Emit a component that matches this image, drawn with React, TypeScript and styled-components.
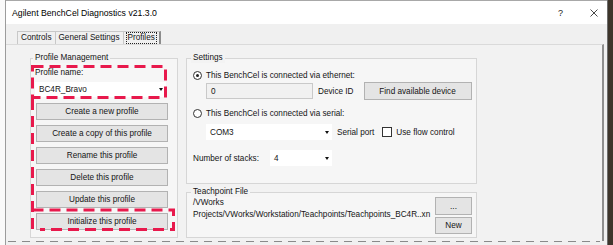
import { createGlobalStyle, styled } from 'styled-components'

const GlobalStyle = createGlobalStyle`
  html, body {
    margin: 0;
    padding: 0;
    background: #ffffff;
  }
  body {
    font-family: "Liberation Sans", Arial, sans-serif;
    font-size: 8.2px;
    color: #141414;
  }
`

/* ----------------------
   Window chrome
---------------------- */

const Frame = styled.div`
  position: relative;
  display: flex;
  width: 613px;
  height: 245px;
  overflow: hidden;
`

const Gutter = styled.div`
  width: 5px;
  background: #fafafa;
`

const Window = styled.div`
  box-sizing: border-box;
  width: 603px;
  display: flex;
  flex-direction: column;
  border-left: 1px solid #9c9c9c;
  border-right: 1px solid #6e6e6e;
`

const Backdrop = styled.div`
  flex: 1;
  background: #3d352b;
`

const TitleBar = styled.div`
  box-sizing: border-box;
  height: 24px;
  display: flex;
  align-items: center;
  padding-left: 6px;
  background: #ffffff;
  border-top: 1px solid #a8a8a8;
  font-size: 8.7px;
  color: #000;
`

const Captions = styled.div`
  margin-left: auto;
  display: flex;
  align-items: center;
  gap: 27px;
  padding-right: 9px;
`

const HelpGlyph = styled.span`
  font-size: 9px;
  color: #222;
`

const Body = styled.div`
  flex: 1;
  display: flex;
  flex-direction: column;
  padding-top: 7px;
  background: #f0f0f0;
`

/* ----------------------
   Tabs
---------------------- */

const TabStrip = styled.div`
  display: flex;
  margin-left: 11px;
  height: 13px;
`

const Tab = styled.div<{ $active?: boolean }>`
  box-sizing: border-box;
  height: 13px;
  padding: 0 3px;
  margin-right: -1px;
  line-height: 11px;
  border: 1px solid #c8c8c8;
  border-bottom: none;
  border-right: ${({ $active }) => ($active ? '2px solid #8c8c8c' : '1px solid #c8c8c8')};
  background: #f0f0f0;
  white-space: nowrap;
`

const FocusText = styled.span`
  display: inline-block;
  padding: 0 1px;
  line-height: 10px;
  outline: 1px dotted #222;
`

const TabPanel = styled.div`
  flex: 1;
  margin-right: 3px;
  padding: 8px 0 0 24px;
  border-top: 1px solid #dadada;
  border-right: 2px solid #8e8e8e;
  background: #f2f2f2;
`

const DashedRule = styled.div`
  height: 1px;
  margin: 0 7px 3px 2px;
  background: repeating-linear-gradient(90deg, #8a8a8a 0 8px, transparent 8px 14px);
`

/* ----------------------
   Panel contents
---------------------- */

const Columns = styled.div`
  display: grid;
  grid-template-columns: 148px 291px;
  column-gap: 8px;
  align-items: stretch;
`

const RightColumn = styled.div`
  display: flex;
  flex-direction: column;
`

const Group = styled.div<{ $height?: number; $gap?: number }>`
  box-sizing: border-box;
  margin-top: ${({ $gap }) => $gap ?? 5}px;
  ${({ $height }) => ($height ? `height: ${$height}px;` : '')}
  border: 1px solid #d6d6d6;
  background: #f6f6f6;
  display: flex;
  flex-direction: column;
`

const GroupTitle = styled.div<{ $indent: number }>`
  width: fit-content;
  margin: -6px 0 0 ${({ $indent }) => $indent}px;
  padding: 0 2px;
  line-height: 10px;
  background: #f3f3f3;
`

const Stack = styled.div<{ $left: number }>`
  display: flex;
  flex-direction: column;
  padding-left: ${({ $left }) => $left}px;
`

const FieldLabel = styled.div`
  margin-top: 5px;
  line-height: 10px;
`

const Combo = styled.div<{ $width: number; $height?: number }>`
  box-sizing: border-box;
  width: ${({ $width }) => $width}px;
  height: ${({ $height }) => $height ?? 16}px;
  display: flex;
  align-items: center;
  padding: 0 3px 0 4px;
  background: #ffffff;
  flex-shrink: 0;
`

const ComboArrow = styled.span`
  margin-left: auto;
  width: 0;
  height: 0;
  border-left: 2.5px solid transparent;
  border-right: 2.5px solid transparent;
  border-top: 3px solid #111;
`

const ButtonStack = styled.div`
  display: flex;
  flex-direction: column;
  gap: 5px;
  margin: 6px 0 0 1px;
`

const Button = styled.div<{ $width: number; $height: number }>`
  box-sizing: border-box;
  width: ${({ $width }) => $width}px;
  height: ${({ $height }) => $height}px;
  display: flex;
  align-items: center;
  justify-content: center;
  border: 1px solid #b2b2b2;
  background: #e4e4e4;
  color: #141414;
  flex-shrink: 0;
`

const Row = styled.div<{ $top: number; $height: number; $indent?: number }>`
  display: flex;
  align-items: center;
  margin-top: ${({ $top }) => $top}px;
  height: ${({ $height }) => $height}px;
  padding-left: ${({ $indent }) => $indent ?? 0}px;
  white-space: nowrap;
`

const Radio = styled.span<{ $checked?: boolean }>`
  box-sizing: border-box;
  width: 9px;
  height: 9px;
  margin-right: 4px;
  border-radius: 50%;
  border: 1px solid #333;
  background: #ffffff;
  display: flex;
  align-items: center;
  justify-content: center;

  &::after {
    content: '';
    width: 3px;
    height: 3px;
    border-radius: 50%;
    background: ${({ $checked }) => ($checked ? '#222' : 'transparent')};
  }
`

const TextBox = styled.div`
  box-sizing: border-box;
  width: 107px;
  height: 16px;
  display: flex;
  align-items: center;
  padding-left: 4px;
  border: 1px solid #c9c9c9;
  background: #f1f1f1;
`

const Inline = styled.span<{ $gap: number; $width?: number }>`
  margin-left: ${({ $gap }) => $gap}px;
  ${({ $width }) => ($width ? `width: ${$width}px;` : '')}
`

const CheckBox = styled.span`
  box-sizing: border-box;
  width: 10px;
  height: 10px;
  margin-left: 8px;
  border: 1px solid #333;
  background: #ffffff;
`

const FileRow = styled.div`
  display: flex;
  padding: 0 4px 3px 6px;
`

const FilePath = styled.div`
  flex: 1;
  line-height: 12px;
  white-space: nowrap;
`

const FileButtons = styled.div`
  display: flex;
  flex-direction: column;
  gap: 2px;
`

const Annotation = styled.svg`
  position: absolute;
  left: 0;
  top: 0;
  pointer-events: none;
`

const profileActions = [
  'Create a new profile',
  'Create a copy of this profile',
  'Rename this profile',
  'Delete this profile',
  'Update this profile',
  'Initialize this profile',
]

export default function App() {
  return (
    <>
      <GlobalStyle />
      <Frame>
        <Gutter />
        <Window>
          <TitleBar>
            Agilent BenchCel Diagnostics v21.3.0
            <Captions>
              <HelpGlyph>?</HelpGlyph>
              <svg width='8' height='8' viewBox='0 0 8 8'>
                <path d='M0.5 0.5 L7.5 7.5 M7.5 0.5 L0.5 7.5' stroke='#333' strokeWidth='0.9' />
              </svg>
            </Captions>
          </TitleBar>

          <Body>
            <TabStrip>
              <Tab>Controls</Tab>
              <Tab>General Settings</Tab>
              <Tab $active>
                <FocusText>Profiles</FocusText>
              </Tab>
            </TabStrip>

            <TabPanel>
              <Columns>
                <Group>
                  <GroupTitle $indent={2}>Profile Management</GroupTitle>
                  <Stack $left={4}>
                    <FieldLabel>Profile name:</FieldLabel>
                    <Combo $width={131} $height={15} style={{ marginTop: 4 }}>
                      BC4R_Bravo
                      <ComboArrow />
                    </Combo>
                    <ButtonStack>
                      {profileActions.map((label) => (
                        <Button key={label} $width={132} $height={17}>
                          {label}
                        </Button>
                      ))}
                    </ButtonStack>
                  </Stack>
                </Group>

                <RightColumn>
                  <Group $height={126}>
                    <GroupTitle $indent={4}>Settings</GroupTitle>
                    <Stack $left={6}>
                      <Row $top={6} $height={12}>
                        <Radio $checked />
                        This BenchCel is connected via ethernet:
                      </Row>
                      <Row $top={1} $height={18} $indent={13}>
                        <TextBox>0</TextBox>
                        <Inline $gap={5}>Device ID</Inline>
                        <Button $width={108} $height={18} style={{ marginLeft: 10 }}>
                          Find available device
                        </Button>
                      </Row>
                      <Row $top={7} $height={12}>
                        <Radio />
                        This BenchCel is connected via serial:
                      </Row>
                      <Row $top={5} $height={16} $indent={13}>
                        <Combo $width={126}>
                          COM3
                          <ComboArrow />
                        </Combo>
                        <Inline $gap={5}>Serial port</Inline>
                        <CheckBox />
                        <Inline $gap={4}>Use flow control</Inline>
                      </Row>
                      <Row $top={10} $height={16}>
                        <Inline $gap={0} $width={77}>
                          Number of stacks:
                        </Inline>
                        <Combo $width={62}>
                          4
                          <ComboArrow />
                        </Combo>
                      </Row>
                    </Stack>
                  </Group>

                  <Group $height={46} $gap={8}>
                    <GroupTitle $indent={4}>Teachpoint File</GroupTitle>
                    <FileRow>
                      <FilePath>
                        /VWorks
                        <br />
                        Projects/VWorks/Workstation/Teachpoints/Teachpoints_BC4R..xn
                      </FilePath>
                      <FileButtons>
                        <Button $width={37} $height={18}>
                          ...
                        </Button>
                        <Button $width={37} $height={17}>
                          New
                        </Button>
                      </FileButtons>
                    </FileRow>
                  </Group>
                </RightColumn>
              </Columns>
            </TabPanel>

            <DashedRule />
          </Body>
        </Window>
        <Backdrop />

        <Annotation width='613' height='245' viewBox='0 0 613 245'>
          <g fill='none' stroke='#e8194c' strokeWidth='3' strokeDasharray='11 6'>
            <rect x='32.5' y='66.5' width='133' height='31' />
            <line x1='32.5' y1='99' x2='32.5' y2='231' />
            <path d='M32.5 210 H173.5 V229.5 H40' />
          </g>
        </Annotation>
      </Frame>
    </>
  )
}
